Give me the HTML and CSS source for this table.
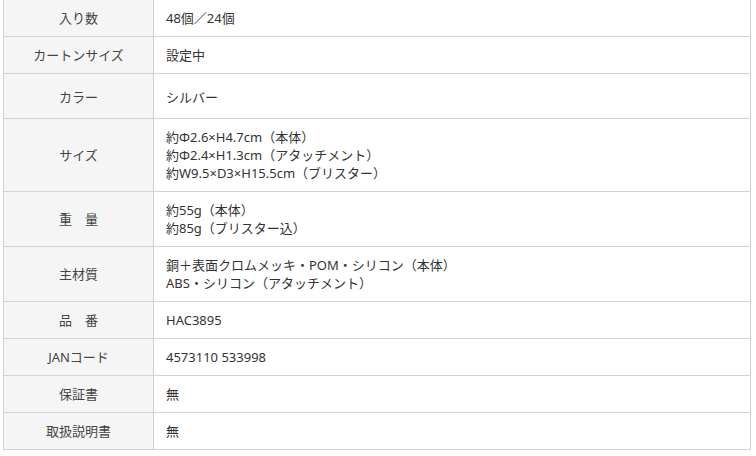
FILE: index.html
```html
<!DOCTYPE html>
<html lang="ja">
<head>
<meta charset="utf-8">
<link rel="stylesheet" href="styles.css">
</head>
<body>
<table class="spec">
  <tr><th>入り数</th><td>48個／24個</td></tr>
  <tr><th>カートンサイズ</th><td>設定中</td></tr>
  <tr class="tall"><th>カラー</th><td>シルバー</td></tr>
  <tr><th>サイズ</th><td>約Φ2.6×H4.7cm（本体）<br>約Φ2.4×H1.3cm（アタッチメント）<br>約W9.5×D3×H15.5cm（ブリスター）</td></tr>
  <tr><th>重　量</th><td>約55g（本体）<br>約85g（ブリスター込）</td></tr>
  <tr><th>主材質</th><td>銅＋表面クロムメッキ・POM・シリコン（本体）<br>ABS・シリコン（アタッチメント）</td></tr>
  <tr><th>品　番</th><td>HAC3895</td></tr>
  <tr><th>JANコード</th><td>4573110 533998</td></tr>
  <tr><th>保証書</th><td>無</td></tr>
  <tr><th>取扱説明書</th><td>無</td></tr>
</table>
</body>
</html>
```
FILE: styles.css
```css
html, body {
  margin: 0;
  padding: 0;
  background: #ffffff;
}
body {
  font-family: "Noto Sans", "Noto Sans CJK JP", sans-serif;
  font-size: 13px;
  color: #333333;
}
.spec {
  margin: -1px 0 0 3px;
  width: 748px;
  border-collapse: collapse;
  table-layout: fixed;
}
.spec th,
.spec td {
  border: 1px solid #d3d3d3;
  padding: 9px 12px;
  line-height: 18px;
  vertical-align: middle;
  text-align: left;
}
.spec th {
  width: 125px;
  background: #f5f5f5;
  font-weight: normal;
  text-align: center;
  color: #444444;
}
.spec .tall td,
.spec .tall th {
  padding-top: 14px;
  padding-bottom: 12px;
}
```
